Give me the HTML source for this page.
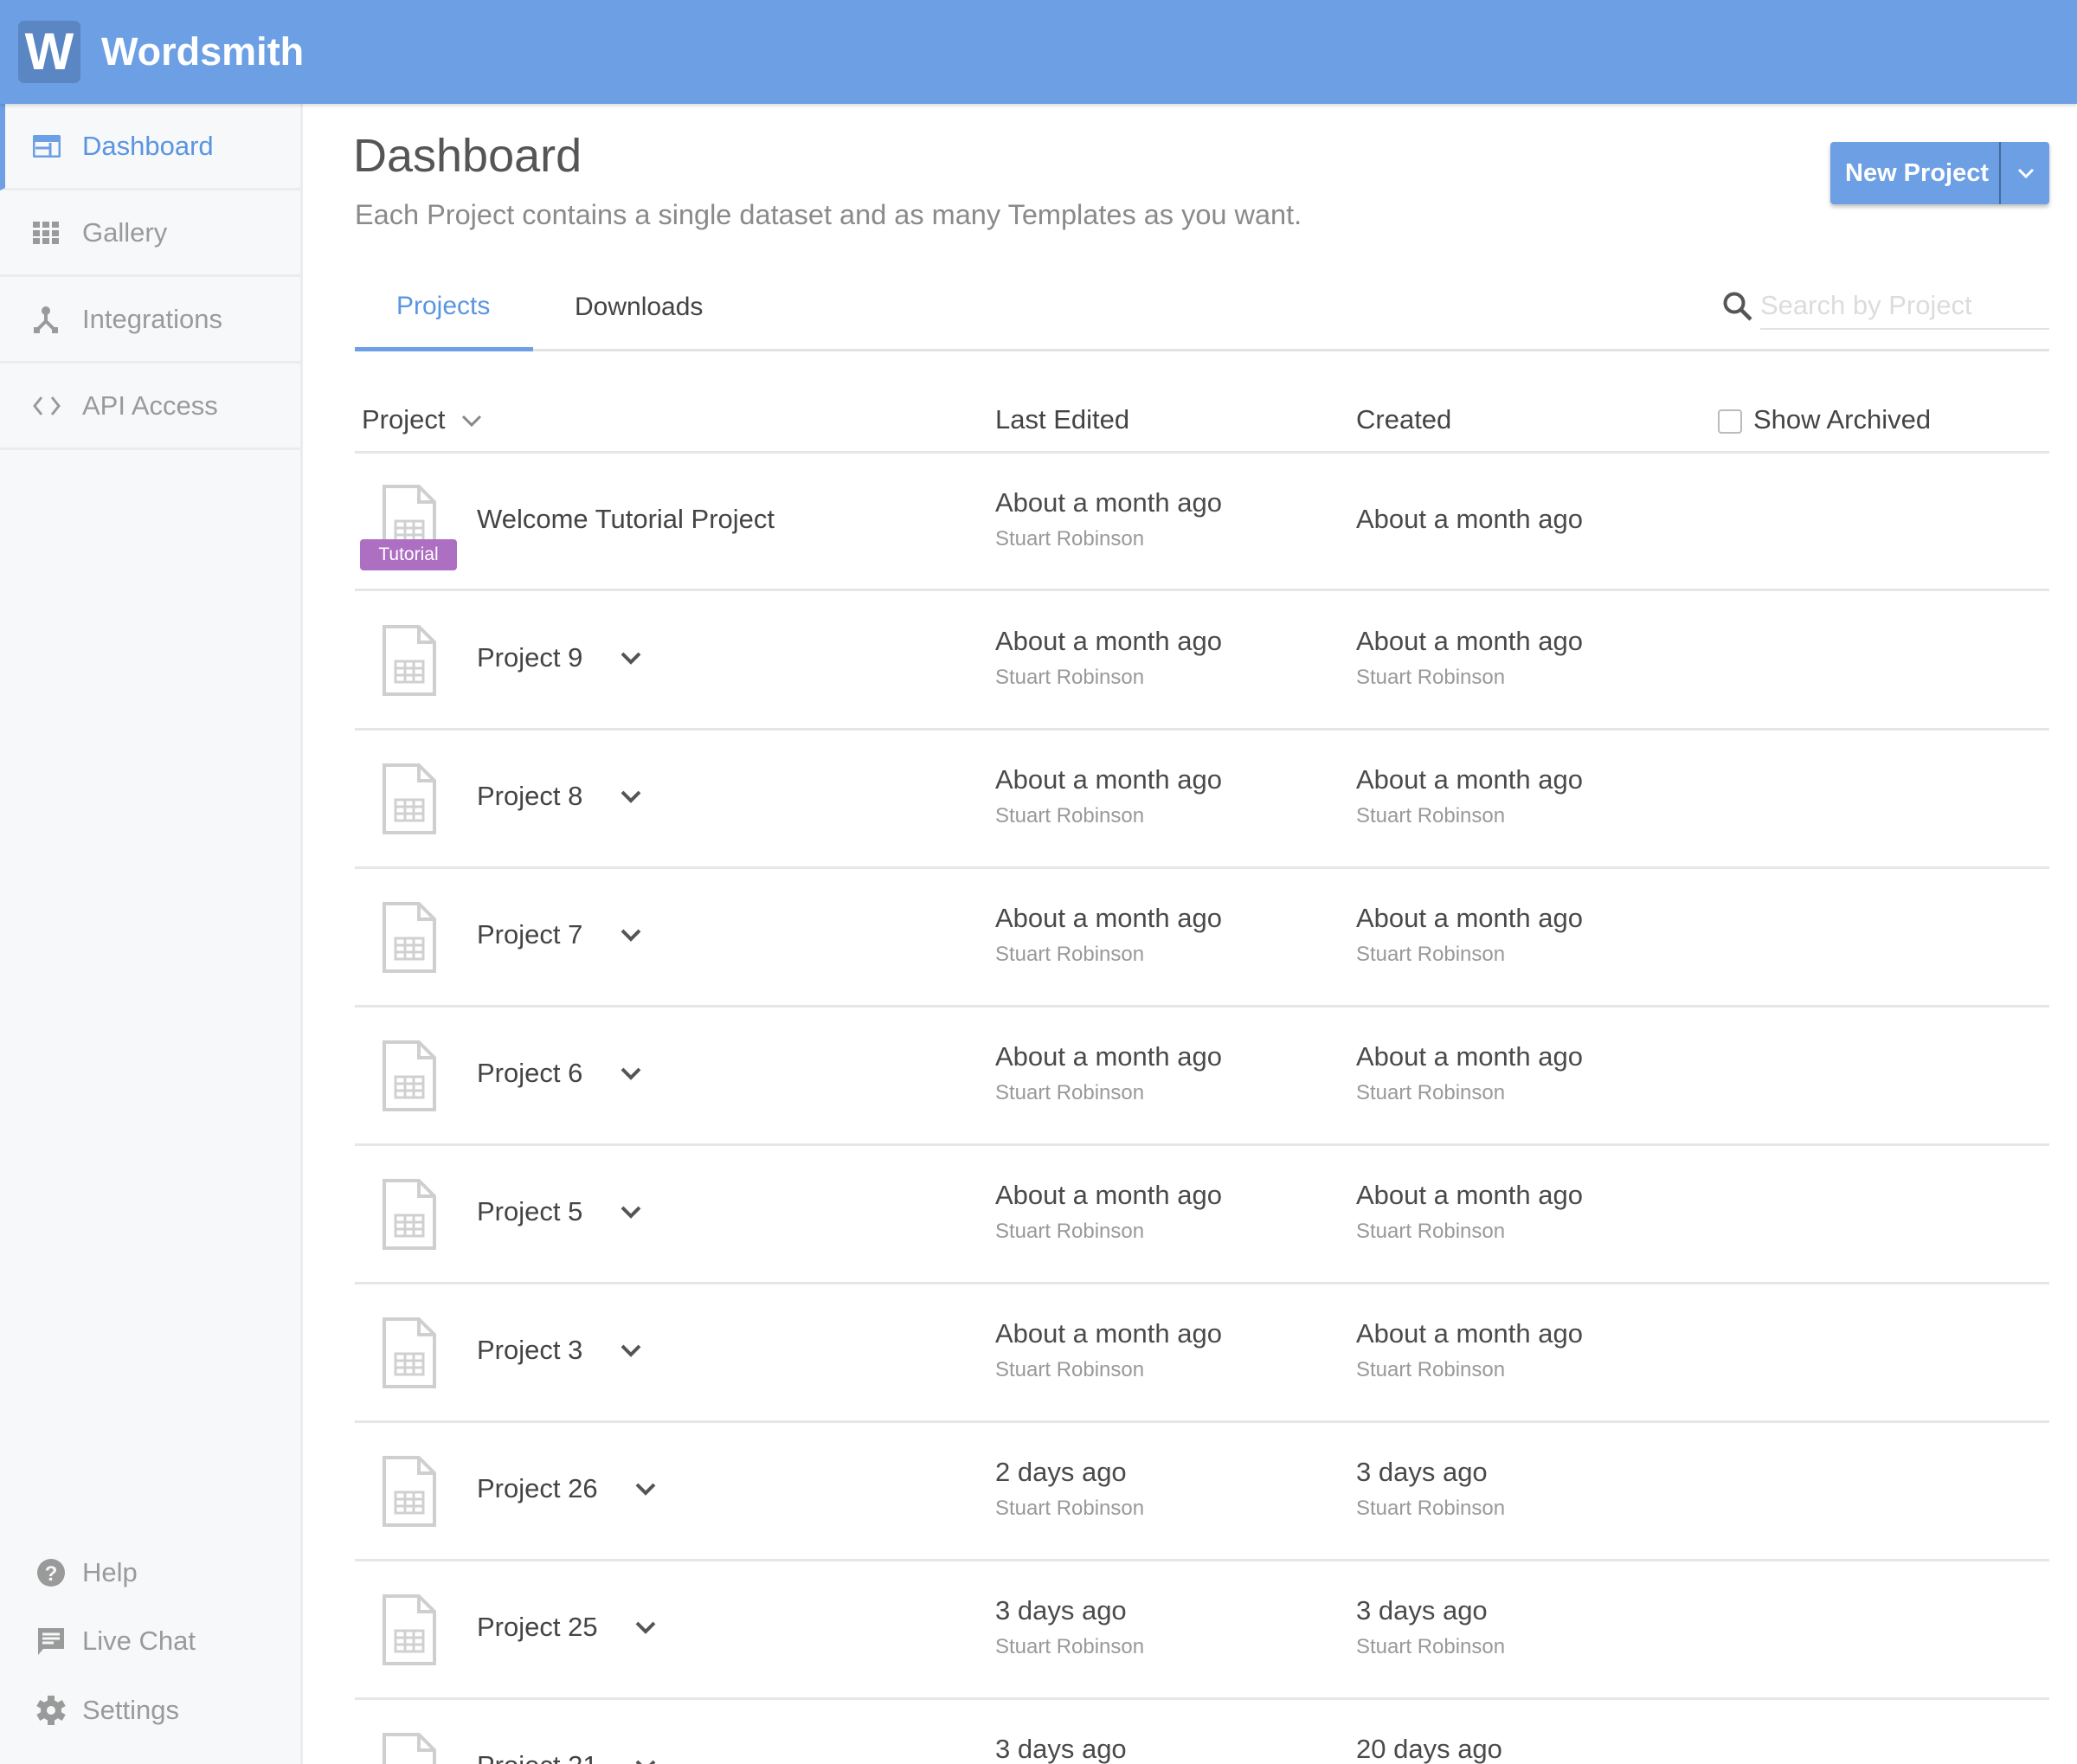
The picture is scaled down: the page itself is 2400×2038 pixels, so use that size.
<!DOCTYPE html>
<html style="height:2038px;overflow:hidden"><head><meta charset="utf-8"><style>
*{margin:0;padding:0;box-sizing:border-box}
body{width:2400px;height:2038px;overflow:hidden;background:#fff;font-family:"Liberation Sans",Arial,sans-serif;position:relative;color:#444}
.abs{position:absolute;white-space:nowrap}
#hdr{position:absolute;left:0;top:0;width:2400px;height:120px;background:#6c9fe4;box-shadow:0 2px 4px rgba(0,0,0,.15);z-index:2}
#side{position:absolute;left:0;top:120px;width:350px;height:1918px;background:#f6f8fa;border-right:3px solid #ececec}
.nav{position:absolute;left:0;width:347px;height:100px;border-bottom:3px solid #ececec}
.nav span{position:absolute;left:95px;top:50%;transform:translateY(-50%);font-size:31px;color:#9a9a9a}
.nav svg,.bt svg{position:absolute;left:38px;top:50%;transform:translateY(-50%)}
.bt{position:absolute;left:0;width:347px;height:60px}
.bt span{position:absolute;left:95px;top:50%;transform:translateY(-50%);font-size:31px;color:#9a9a9a}
.row{position:absolute;left:410px;width:1958px;height:160px;border-bottom:3px solid #e6e6e6}
.row .ic{position:absolute;left:32px;top:38px}
.row .nm{position:absolute;left:141px;top:76px;transform:translateY(-50%);font-size:31px;color:#444;white-space:nowrap}
.row .chev{position:absolute;top:68px}
.l1{position:absolute;top:57px;transform:translateY(-50%);font-size:31px;color:#4a4a4a;white-space:nowrap}
.l2{position:absolute;top:99px;transform:translateY(-50%);font-size:24px;color:#999;white-space:nowrap}
.c1{left:740px}.c2{left:1157px}
</style></head><body>
<svg width="0" height="0" style="position:absolute"><defs>
<symbol id="file" viewBox="0 0 62 82"><path d="M2 2H42L60 20V80H2Z M42 2V20H60" fill="#fff" stroke="#cfcfcf" stroke-width="4" stroke-linejoin="miter"/><g fill="none" stroke="#d0d0d0" stroke-width="3"><rect x="15" y="42" width="32" height="24"/><path d="M15 50H47M15 58H47M26 42V66M36 42V66"/></g></symbol>
<symbol id="chv" viewBox="0 0 26 16"><path d="M3 3L13 13L23 3" fill="none" stroke="#555" stroke-width="4"/></symbol>
</defs></svg>

<div id="hdr">
  <div class="abs" style="left:21px;top:24px;width:72px;height:72px;background:#5a86c4;border-radius:7px;color:#fff;font-weight:bold;font-size:60px;line-height:72px;text-align:center">W</div>
  <div class="abs" style="left:117px;top:30px;font-size:45px;font-weight:bold;color:#fff;line-height:60px">Wordsmith</div>
</div>

<div id="side">
  <div class="nav" style="top:0;border-left:6px solid #6c9fe4"><svg width="32" height="26" viewBox="0 0 32 26" style="left:32px"><rect x="1" y="1" width="30" height="24" rx="2" fill="none" stroke="#6c9fe4" stroke-width="3"/><rect x="1" y="1" width="30" height="7" fill="#6c9fe4"/><path d="M3 15H20M20 9V24" stroke="#6c9fe4" stroke-width="3"/></svg><span style="color:#5b95e0;left:89px">Dashboard</span></div>
  <div class="nav" style="top:100px"><svg width="30" height="26" viewBox="0 0 30 26"><g fill="#9a9a9a"><rect x="0" y="0" width="8" height="7"/><rect x="11" y="0" width="8" height="7"/><rect x="22" y="0" width="8" height="7"/><rect x="0" y="10" width="8" height="7"/><rect x="11" y="10" width="8" height="7"/><rect x="22" y="10" width="8" height="7"/><rect x="0" y="19" width="8" height="7"/><rect x="11" y="19" width="8" height="7"/><rect x="22" y="19" width="8" height="7"/></g></svg><span>Gallery</span></div>
  <div class="nav" style="top:200px"><svg width="30" height="32" viewBox="0 0 30 32"><circle cx="15" cy="6" r="5" fill="#9a9a9a"/><path d="M15 8V18L5 28M15 18L25 28" stroke="#9a9a9a" stroke-width="4" fill="none"/><rect x="1" y="25" width="7" height="7" fill="#9a9a9a"/><rect x="22" y="25" width="7" height="7" fill="#9a9a9a"/></svg><span>Integrations</span></div>
  <div class="nav" style="top:300px"><svg width="32" height="24" viewBox="0 0 32 24"><path d="M10 2L2 12L10 22M22 2L30 12L22 22" stroke="#9a9a9a" stroke-width="3" fill="none"/></svg><span>API Access</span></div>

  <div class="bt" style="top:1667px"><svg width="34" height="34" viewBox="0 0 34 34" style="left:42px"><circle cx="17" cy="17" r="16" fill="#9a9a9a"/><text x="17" y="26" font-size="24" font-weight="bold" fill="#f6f8fa" text-anchor="middle" font-family="Liberation Sans">?</text></svg><span>Help</span></div>
  <div class="bt" style="top:1746px"><svg width="34" height="34" viewBox="0 0 34 34" style="left:42px"><path d="M2 2H32V26H8L2 33Z" fill="#9a9a9a"/><path d="M7 9H27M7 14H27M7 19H20" stroke="#f6f8fa" stroke-width="3"/></svg><span>Live Chat</span></div>
  <div class="bt" style="top:1826px"><svg width="34" height="34" viewBox="0 0 34 34" style="left:42px"><g fill="#9a9a9a"><circle cx="17" cy="17" r="12"/><rect x="13" y="0" width="8" height="34"/><rect x="13" y="0" width="8" height="34" transform="rotate(60 17 17)"/><rect x="13" y="0" width="8" height="34" transform="rotate(120 17 17)"/></g><circle cx="17" cy="17" r="5" fill="#f6f8fa"/></svg><span>Settings</span></div>
</div>

<div class="abs" style="left:408px;top:145px;font-size:54px;color:#555;line-height:70px">Dashboard</div>
<div class="abs" style="left:410px;top:228px;font-size:32.5px;color:#8a8a8a;line-height:40px">Each Project contains a single dataset and as many Templates as you want.</div>

<div class="abs" style="left:2115px;top:164px;width:253px;height:72px;background:#6c9fe4;border-radius:4px;box-shadow:0 3px 5px rgba(0,0,0,.25)">
  <div class="abs" style="left:17px;top:0;line-height:72px;font-size:29px;font-weight:bold;color:#fff">New Project</div>
  <div class="abs" style="left:195px;top:0;width:2px;height:72px;background:#44699c"></div>
  <svg class="abs" style="left:216px;top:29px" width="20" height="14" viewBox="0 0 20 14"><path d="M2 3L10 11L18 3" stroke="#fff" stroke-width="3" fill="none"/></svg>
</div>

<div class="abs" style="left:458px;top:334px;font-size:30px;color:#5b95e0;line-height:40px">Projects</div>
<div class="abs" style="left:664px;top:335px;font-size:30px;color:#444;line-height:40px">Downloads</div>
<div class="abs" style="left:410px;top:403px;width:1958px;height:3px;background:#e2e2e2"></div>
<div class="abs" style="left:410px;top:401px;width:206px;height:5px;background:#6c9fe4"></div>

<svg class="abs" style="left:1990px;top:336px" width="36" height="36" viewBox="0 0 36 36"><circle cx="14" cy="14" r="10.5" stroke="#555" stroke-width="4" fill="none"/><path d="M21.5 21.5L33 33" stroke="#555" stroke-width="4.5"/></svg>
<div class="abs" style="left:2034px;top:333px;font-size:31px;color:#dcdcdc;line-height:40px">Search by Project</div>
<div class="abs" style="left:2034px;top:379px;width:334px;height:2px;background:#e2e2e2"></div>

<div class="abs" style="left:418px;top:465px;font-size:31px;color:#444;line-height:40px">Project</div>
<svg class="abs" style="left:533px;top:478px" width="24" height="16" viewBox="0 0 24 16"><path d="M2 3L12 13L22 3" stroke="#888" stroke-width="3" fill="none"/></svg>
<div class="abs" style="left:1150px;top:465px;font-size:31px;color:#444;line-height:40px">Last Edited</div>
<div class="abs" style="left:1567px;top:465px;font-size:31px;color:#444;line-height:40px">Created</div>
<div class="abs" style="left:1985px;top:473px;width:28px;height:28px;border:2px solid #bbb;border-radius:4px;background:#fff"></div>
<div class="abs" style="left:2026px;top:465px;font-size:31px;color:#444;line-height:40px">Show Archived</div>
<div class="abs" style="left:410px;top:521px;width:1958px;height:3px;background:#e6e6e6"></div>

<div class="row" style="top:524px;height:159px">
  <svg class="ic" style="top:36px" width="62" height="82"><use href="#file"/></svg>
  <div class="abs" style="left:6px;top:99px;width:112px;height:36px;background:#ad6fc1;border-radius:4px;color:#fff;font-size:21px;line-height:36px;text-align:center">Tutorial</div>
  <div class="nm">Welcome Tutorial Project</div>
  <div class="l1 c1">About a month ago</div><div class="l2 c1">Stuart Robinson</div>
  <div class="l1 c2" style="top:76px">About a month ago</div>
</div>

<div class="row" style="top:684px"><svg class="ic" width="62" height="82"><use href="#file"/></svg><div class="nm">Project 9</div><svg class="chev" style="left:306px" width="26" height="16"><use href="#chv"/></svg><div class="l1 c1">About a month ago</div><div class="l2 c1">Stuart Robinson</div><div class="l1 c2">About a month ago</div><div class="l2 c2">Stuart Robinson</div></div>
<div class="row" style="top:844px"><svg class="ic" width="62" height="82"><use href="#file"/></svg><div class="nm">Project 8</div><svg class="chev" style="left:306px" width="26" height="16"><use href="#chv"/></svg><div class="l1 c1">About a month ago</div><div class="l2 c1">Stuart Robinson</div><div class="l1 c2">About a month ago</div><div class="l2 c2">Stuart Robinson</div></div>
<div class="row" style="top:1004px"><svg class="ic" width="62" height="82"><use href="#file"/></svg><div class="nm">Project 7</div><svg class="chev" style="left:306px" width="26" height="16"><use href="#chv"/></svg><div class="l1 c1">About a month ago</div><div class="l2 c1">Stuart Robinson</div><div class="l1 c2">About a month ago</div><div class="l2 c2">Stuart Robinson</div></div>
<div class="row" style="top:1164px"><svg class="ic" width="62" height="82"><use href="#file"/></svg><div class="nm">Project 6</div><svg class="chev" style="left:306px" width="26" height="16"><use href="#chv"/></svg><div class="l1 c1">About a month ago</div><div class="l2 c1">Stuart Robinson</div><div class="l1 c2">About a month ago</div><div class="l2 c2">Stuart Robinson</div></div>
<div class="row" style="top:1324px"><svg class="ic" width="62" height="82"><use href="#file"/></svg><div class="nm">Project 5</div><svg class="chev" style="left:306px" width="26" height="16"><use href="#chv"/></svg><div class="l1 c1">About a month ago</div><div class="l2 c1">Stuart Robinson</div><div class="l1 c2">About a month ago</div><div class="l2 c2">Stuart Robinson</div></div>
<div class="row" style="top:1484px"><svg class="ic" width="62" height="82"><use href="#file"/></svg><div class="nm">Project 3</div><svg class="chev" style="left:306px" width="26" height="16"><use href="#chv"/></svg><div class="l1 c1">About a month ago</div><div class="l2 c1">Stuart Robinson</div><div class="l1 c2">About a month ago</div><div class="l2 c2">Stuart Robinson</div></div>
<div class="row" style="top:1644px"><svg class="ic" width="62" height="82"><use href="#file"/></svg><div class="nm">Project 26</div><svg class="chev" style="left:323px" width="26" height="16"><use href="#chv"/></svg><div class="l1 c1">2 days ago</div><div class="l2 c1">Stuart Robinson</div><div class="l1 c2">3 days ago</div><div class="l2 c2">Stuart Robinson</div></div>
<div class="row" style="top:1804px"><svg class="ic" width="62" height="82"><use href="#file"/></svg><div class="nm">Project 25</div><svg class="chev" style="left:323px" width="26" height="16"><use href="#chv"/></svg><div class="l1 c1">3 days ago</div><div class="l2 c1">Stuart Robinson</div><div class="l1 c2">3 days ago</div><div class="l2 c2">Stuart Robinson</div></div>
<div class="row" style="top:1964px;height:74px;border:none;overflow:hidden"><svg class="ic" width="62" height="82"><use href="#file"/></svg><div class="nm">Project 21</div><svg class="chev" style="left:323px" width="26" height="16"><use href="#chv"/></svg><div class="l1 c1">3 days ago</div><div class="l1 c2">20 days ago</div></div>
</body></html>
